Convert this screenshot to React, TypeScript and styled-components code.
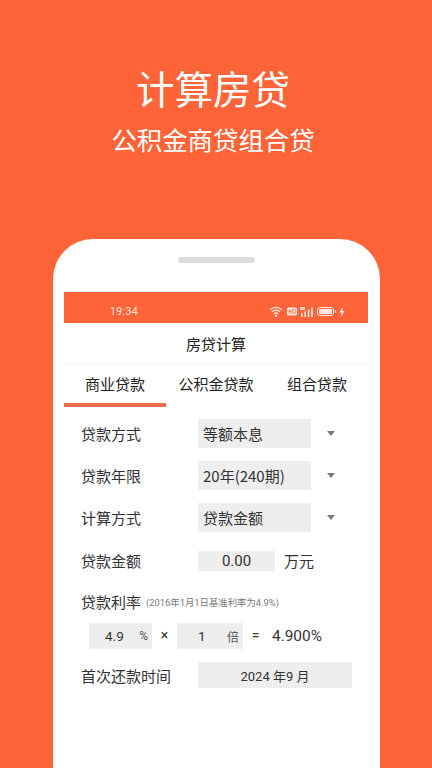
import React from "react";
import styled, { createGlobalStyle } from "styled-components";

const Global = createGlobalStyle`
  html, body { margin: 0; padding: 0; background: #ff6338; }
  body { font-family: "Noto Sans CJK SC", "Noto Sans", sans-serif; }
`;

const Page = styled.div`
  width: 432px;
  height: 768px;
  overflow: hidden;
  background: #ff6338;
  display: flex;
  flex-direction: column;
  align-items: center;
`;

const Hero = styled.header`
  height: 239px;
  width: 100%;
  flex: none;
  display: flex;
  flex-direction: column;
  align-items: center;
  padding: 59px 6px 0 0;
  box-sizing: border-box;
  color: #fff;
`;

const HeroTitle = styled.h1`
  margin: 0;
  font-size: 38.5px;
  font-weight: 400;
  line-height: 56px;
`;

const HeroSub = styled.p`
  margin: 0;
  font-size: 25.4px;
  font-weight: 400;
  line-height: 36px;
  margin-top: 6px;
`;

const Phone = styled.section`
  width: 327px;
  flex: 1;
  margin-left: 1px;
  background: #fff;
  border-radius: 40px 40px 0 0;
  padding: 0 12px 0 11px;
  box-sizing: border-box;
  display: flex;
  flex-direction: column;
`;

const Speaker = styled.div`
  width: 77px;
  height: 6px;
  border-radius: 3px;
  background: #dcdcdc;
  align-self: center;
  margin-top: 18px;
  margin-bottom: 29px;
`;

const StatusBar = styled.div`
  height: 31px;
  background: #ff6338;
  color: #ffe9e0;
  display: flex;
  align-items: center;
  justify-content: space-between;
  padding: 8px 23px 0 46px;
  box-sizing: border-box;
  font-family: Roboto, sans-serif;
  font-size: 10.5px;
  letter-spacing: 0.4px;
`;

const StatusIcons = styled.div`
  display: flex;
  align-items: center;
  gap: 3.5px;
`;

const NavBar = styled.div`
  height: 42px;
  display: flex;
  align-items: center;
  justify-content: center;
  font-size: 15px;
  color: #222;
  border-bottom: 1px solid #f3f3f3;
  box-sizing: border-box;
`;

const Tabs = styled.nav`
  display: grid;
  grid-template-columns: 102px 1fr 102px;
  height: 42px;
`;

const Tab = styled.div<{ $active?: boolean }>`
  display: flex;
  align-items: center;
  justify-content: center;
  font-size: 15px;
  color: #222;
  padding-bottom: 1px;
  box-sizing: border-box;
  border-bottom: 4px solid ${(p) => (p.$active ? "#e96d48" : "transparent")};
`;

const Form = styled.div`
  padding: 5px 0 0 17px;
  display: flex;
  flex-direction: column;
`;

const Row = styled.div<{ $h: number }>`
  display: flex;
  align-items: center;
  height: ${(p) => p.$h}px;
`;

const Label = styled.span`
  width: 117px;
  flex: none;
  font-size: 15px;
  color: #333;
`;

const Select = styled.div`
  width: 113px;
  height: 29px;
  background: #eeeeee;
  display: flex;
  align-items: center;
  padding-left: 5px;
  box-sizing: border-box;
  font-size: 15px;
  color: #333;
`;

const Caret = styled.span`
  width: 0;
  height: 0;
  margin-left: 16px;
  border-left: 4.5px solid transparent;
  border-right: 4.5px solid transparent;
  border-top: 5px solid #777;
`;

const Amount = styled.div`
  width: 77px;
  height: 20px;
  background: #eeeeee;
  display: flex;
  align-items: center;
  justify-content: center;
  font-family: Roboto, sans-serif;
  font-size: 15px;
  color: #333;
`;

const Unit = styled.span`
  margin-left: 9px;
  font-size: 15px;
  color: #333;
`;

const Hint = styled.span`
  font-size: 9.4px;
  color: #777;
  margin-left: 5px;
  font-family: Roboto, "Noto Sans CJK SC", sans-serif;
`;

const RateLabel = styled(Label)`
  width: auto;
`;

const RateBox = styled.div<{ $w: number }>`
  width: ${(p) => p.$w}px;
  height: 26px;
  background: #eeeeee;
  display: flex;
  align-items: center;
  font-family: Roboto, "Noto Sans CJK SC", sans-serif;
  font-size: 13.5px;
  color: #333;
  box-sizing: border-box;
`;

const RateValue = styled.span<{ $left: number }>`
  margin-left: ${(p) => p.$left}px;
`;

const RateUnit = styled.span`
  margin-left: auto;
  margin-right: 4px;
  font-size: 12px;
  color: #555;
`;

const Operator = styled.span<{ $w: number }>`
  width: ${(p) => p.$w}px;
  text-align: center;
  font-family: Roboto, sans-serif;
  font-size: 14px;
  color: #333;
  margin-top: -3px;
`;

const Result = styled.span`
  font-family: Roboto, sans-serif;
  font-size: 15.4px;
  color: #333;
  margin-left: 4px;
`;

const RateRow = styled(Row)`
  margin-left: 8px;
`;

const DateBox = styled.div`
  width: 154px;
  height: 26px;
  background: #eeeeee;
  display: flex;
  align-items: center;
  justify-content: center;
  font-family: Roboto, "Noto Sans CJK SC", sans-serif;
  font-size: 13px;
  color: #333;
`;

const StatusGlyphs = () => (
  <>
    <svg width="14" height="11" viewBox="0 0 13 10" fill="none" stroke="#ffe9e0" strokeWidth="1.2">
      <path d="M1 3.4a8 8 0 0 1 11 0M2.8 5.3a5.4 5.4 0 0 1 7.4 0M4.6 7a3 3 0 0 1 3.8 0" />
      <circle cx="6.5" cy="8.9" r=".6" fill="#ffe9e0" />
    </svg>
    <svg width="10" height="9" viewBox="0 0 10 9">
      <rect x="0" y="0.5" width="10" height="8" rx="1.5" fill="#ffe9e0" />
      <path d="M2.2 2.5v4M4.2 2.5v4M2.2 4.5h2M5.8 2.5v4h1a2 2 0 0 0 0-4z" fill="none" stroke="#ff6338" strokeWidth=".8" />
    </svg>
    <svg width="13" height="10" viewBox="0 0 13 10" fill="#ffe9e0">
      <rect x="0" y="0" width="5" height="3" opacity=".8" />
      <rect x="1" y="6" width="1.6" height="4" />
      <rect x="4.4" y="4.5" width="1.6" height="5.5" />
      <rect x="7.8" y="2.5" width="1.6" height="7.5" />
      <rect x="11.2" y="0.5" width="1.6" height="9.5" />
    </svg>
    <svg width="19" height="9" viewBox="0 0 19 9" fill="none">
      <rect x=".5" y=".5" width="16" height="8" rx="2.5" stroke="#ffe9e0" />
      <rect x="2" y="2" width="13" height="5" rx="1.2" fill="#ffe9e0" />
      <rect x="17.6" y="3" width="1.2" height="3" rx=".6" fill="#ffe9e0" />
    </svg>
    <svg width="6" height="10" viewBox="0 0 6 10" fill="#ffe9e0">
      <path d="M3.6 0 .4 5.6h2.2L2 10l3.6-6H3.2z" />
    </svg>
  </>
);

export default function App() {
  return (
    <Page>
      <Global />
      <Hero>
        <HeroTitle>计算房贷</HeroTitle>
        <HeroSub>公积金商贷组合贷</HeroSub>
      </Hero>
      <Phone>
        <Speaker />
        <StatusBar>
          <span>19:34</span>
          <StatusIcons>
            <StatusGlyphs />
          </StatusIcons>
        </StatusBar>
        <NavBar>房贷计算</NavBar>
        <Tabs>
          <Tab $active>商业贷款</Tab>
          <Tab>公积金贷款</Tab>
          <Tab>组合贷款</Tab>
        </Tabs>
        <Form>
          <Row $h={42}>
            <Label>贷款方式</Label>
            <Select>等额本息</Select>
            <Caret />
          </Row>
          <Row $h={42}>
            <Label>贷款年限</Label>
            <Select>20年(240期)</Select>
            <Caret />
          </Row>
          <Row $h={42}>
            <Label>计算方式</Label>
            <Select>贷款金额</Select>
            <Caret />
          </Row>
          <Row $h={45}>
            <Label>贷款金额</Label>
            <Amount>0.00</Amount>
            <Unit>万元</Unit>
          </Row>
          <Row $h={37}>
            <RateLabel>贷款利率</RateLabel>
            <Hint>(2016年1月1日基准利率为4.9%)</Hint>
          </Row>
          <RateRow $h={32}>
            <RateBox $w={63}>
              <RateValue $left={16}>4.9</RateValue>
              <RateUnit>%</RateUnit>
            </RateBox>
            <Operator $w={25}>×</Operator>
            <RateBox $w={66}>
              <RateValue $left={21}>1</RateValue>
              <RateUnit>倍</RateUnit>
            </RateBox>
            <Operator $w={25}>=</Operator>
            <Result>4.900%</Result>
          </RateRow>
          <Row $h={46}>
            <Label>首次还款时间</Label>
            <DateBox>2024 年9 月</DateBox>
          </Row>
        </Form>
      </Phone>
    </Page>
  );
}
